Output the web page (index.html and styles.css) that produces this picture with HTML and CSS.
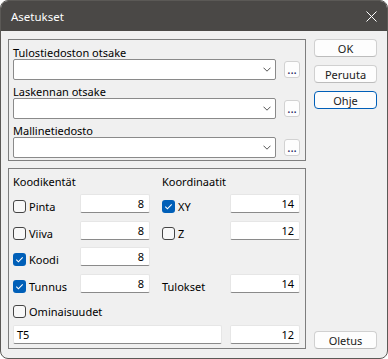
FILE: index.html
```html
<!DOCTYPE html>
<html lang="fi">

<head>
  <meta charset="UTF-8">
  <meta name="viewport" content="width=device-width, initial-scale=1.0">
  <title>Asetukset</title>
  <link rel="stylesheet" href="styles.css">
</head>

<body>
  <div class="window">
    <div class="titlebar">
      <span>Asetukset</span>
      <svg class="close" width="11" height="11" viewBox="0 0 11 11">
        <path d="M0.5 0.5 L10.5 10.5 M10.5 0.5 L0.5 10.5" stroke="#fff" stroke-width="1" fill="none" />
      </svg>
    </div>

    <div class="content">
      <div class="main">
        <div class="group files">
          <div class="file-row">
            <label>Tulostiedoston otsake</label>
            <div class="line">
              <div class="combo"><svg width="8" height="5" viewBox="0 0 8 5"><path d="M0.5 0.7 L4 4.2 L7.5 0.7" stroke="#555" stroke-width="1" fill="none" /></svg></div>
              <button class="browse">...</button>
            </div>
          </div>
          <div class="file-row">
            <label>Laskennan otsake</label>
            <div class="line">
              <div class="combo"><svg width="8" height="5" viewBox="0 0 8 5"><path d="M0.5 0.7 L4 4.2 L7.5 0.7" stroke="#555" stroke-width="1" fill="none" /></svg></div>
              <button class="browse">...</button>
            </div>
          </div>
          <div class="file-row">
            <label>Mallinetiedosto</label>
            <div class="line">
              <div class="combo"><svg width="8" height="5" viewBox="0 0 8 5"><path d="M0.5 0.7 L4 4.2 L7.5 0.7" stroke="#555" stroke-width="1" fill="none" /></svg></div>
              <button class="browse">...</button>
            </div>
          </div>
        </div>

        <div class="group fields">
          <div class="heading left">Koodikentät</div>
          <div class="heading right">Koordinaatit</div>

          <div class="check"><span class="box"></span>Pinta</div>
          <div class="num">8</div>
          <div class="check col4"><span class="box on"><svg width="13" height="13" viewBox="0 0 13 13"><path d="M3.3 6.7 L5.4 8.8 L9.7 4.3" stroke="#fff" stroke-width="1.1" fill="none" /></svg></span>XY</div>
          <div class="num">14</div>

          <div class="check"><span class="box"></span>Viiva</div>
          <div class="num">8</div>
          <div class="check col4"><span class="box"></span>Z</div>
          <div class="num">12</div>

          <div class="check"><span class="box on"><svg width="13" height="13" viewBox="0 0 13 13"><path d="M3.3 6.7 L5.4 8.8 L9.7 4.3" stroke="#fff" stroke-width="1.1" fill="none" /></svg></span>Koodi</div>
          <div class="num">8</div>
          <div class="empty"></div>

          <div class="check"><span class="box on"><svg width="13" height="13" viewBox="0 0 13 13"><path d="M3.3 6.7 L5.4 8.8 L9.7 4.3" stroke="#fff" stroke-width="1.1" fill="none" /></svg></span>Tunnus</div>
          <div class="num">8</div>
          <div class="check col4">Tulokset</div>
          <div class="num">14</div>

          <div class="check wide"><span class="box"></span>Ominaisuudet</div>

          <div class="text wide-input">T5</div>
          <div class="num col5">12</div>
        </div>
      </div>

      <div class="buttons">
        <button>OK</button>
        <button>Peruuta</button>
        <button class="default">Ohje</button>
        <button class="bottom">Oletus</button>
      </div>
    </div>
  </div>
</body>

</html>
```

FILE: styles.css
```css
html,
body {
  margin: 0;
  padding: 0;
  background-color: #ffffff;
  font-family: "Noto Sans", "Open Sans", sans-serif;
  font-size: 11px;
  color: #000;
}

.window {
  width: 388px;
  height: 359px;
  box-sizing: border-box;
  border: 1px solid #5b5956;
  border-radius: 8px;
  overflow: hidden;
  background-color: #f0f0f0;
  display: flex;
  flex-direction: column;
}

.titlebar {
  height: 30px;
  flex-shrink: 0;
  background-color: #4a4846;
  color: #fff;
  font-size: 11.5px;
  display: flex;
  align-items: center;
  justify-content: space-between;
  padding: 0 10px 0 10px;
}

.content {
  flex-grow: 1;
  display: flex;
  gap: 8px;
  padding: 8px 10px 9px 7px;
}

.main {
  width: 298px;
  display: flex;
  flex-direction: column;
  gap: 7px;
}

.group {
  box-sizing: border-box;
  border: 1px solid #7e7e7e;
  padding: 0 5px 0 4px;
}

/* file rows */

.files {
  height: 122px;
  padding-top: 1px;
}

.file-row label {
  display: block;
  height: 13px;
  line-height: 13px;
  padding-top: 5px;
}

.file-row .line {
  display: flex;
  align-items: center;
  gap: 8px;
}

.combo {
  box-sizing: border-box;
  width: 264px;
  height: 21px;
  background-color: #fff;
  border: 1px solid #8a8a8a;
  border-radius: 2px;
  display: flex;
  align-items: center;
  justify-content: flex-end;
  padding-right: 4px;
}

.browse {
  box-sizing: border-box;
  width: 16px;
  height: 17px;
  padding: 0;
  border: 1px solid #d2d2d2;
  border-radius: 3px;
  background-color: #fdfdfd;
  font-family: inherit;
  font-size: 12px;
  line-height: 14px;
  color: #1a1a60;
}

/* code fields */

.fields {
  flex-grow: 1;
  display: grid;
  grid-template-columns: 67px 70px 12px 68px 70px;
  grid-template-rows: 25px 26.5px 26.5px 26.5px 25.5px 26px 19px;
  align-items: start;
}

.heading {
  line-height: 25px;
}

.heading.left {
  grid-column: 1 / 3;
}

.heading.right {
  grid-column: 4 / 6;
}

.check {
  display: flex;
  align-items: flex-start;
  gap: 3px;
  padding-top: 6px;
  line-height: 13px;
}

.check.col4 {
  grid-column: 4;
}

.check.wide {
  grid-column: 1 / 6;
}

.box {
  box-sizing: border-box;
  width: 13px;
  height: 13px;
  border: 1px solid #454545;
  border-radius: 3px;
  background-color: #f8f8f8;
  flex-shrink: 0;
}

.box.on {
  border: none;
  background-color: #005fb8;
}

.box svg {
  display: block;
}

.num,
.text {
  box-sizing: border-box;
  height: 19px;
  line-height: 17px;
  background-color: #fff;
  border: 1px solid #e6e6e6;
  border-bottom-color: #8a8a8a;
  border-radius: 2px;
}

.num {
  text-align: right;
  padding-right: 5px;
}

.text {
  padding-left: 3px;
}

.empty {
  grid-column: 3 / 6;
}

.wide-input {
  grid-column: 1 / 5;
  margin-right: 8px;
}

.num.col5 {
  grid-column: 5;
}

/* buttons */

.buttons {
  width: 63px;
  display: flex;
  flex-direction: column;
  gap: 8px;
}

.buttons button {
  box-sizing: border-box;
  height: 18px;
  padding: 0;
  border: 1px solid #d0d0d0;
  border-bottom-color: #bcbcbc;
  border-radius: 4px;
  background-color: #fdfdfd;
  font-family: inherit;
  font-size: 11px;
  line-height: 15px;
  color: #1a1a1a;
}

.buttons button.default {
  border-color: #005fb8;
}

.buttons button.bottom {
  margin-top: auto;
}
```
